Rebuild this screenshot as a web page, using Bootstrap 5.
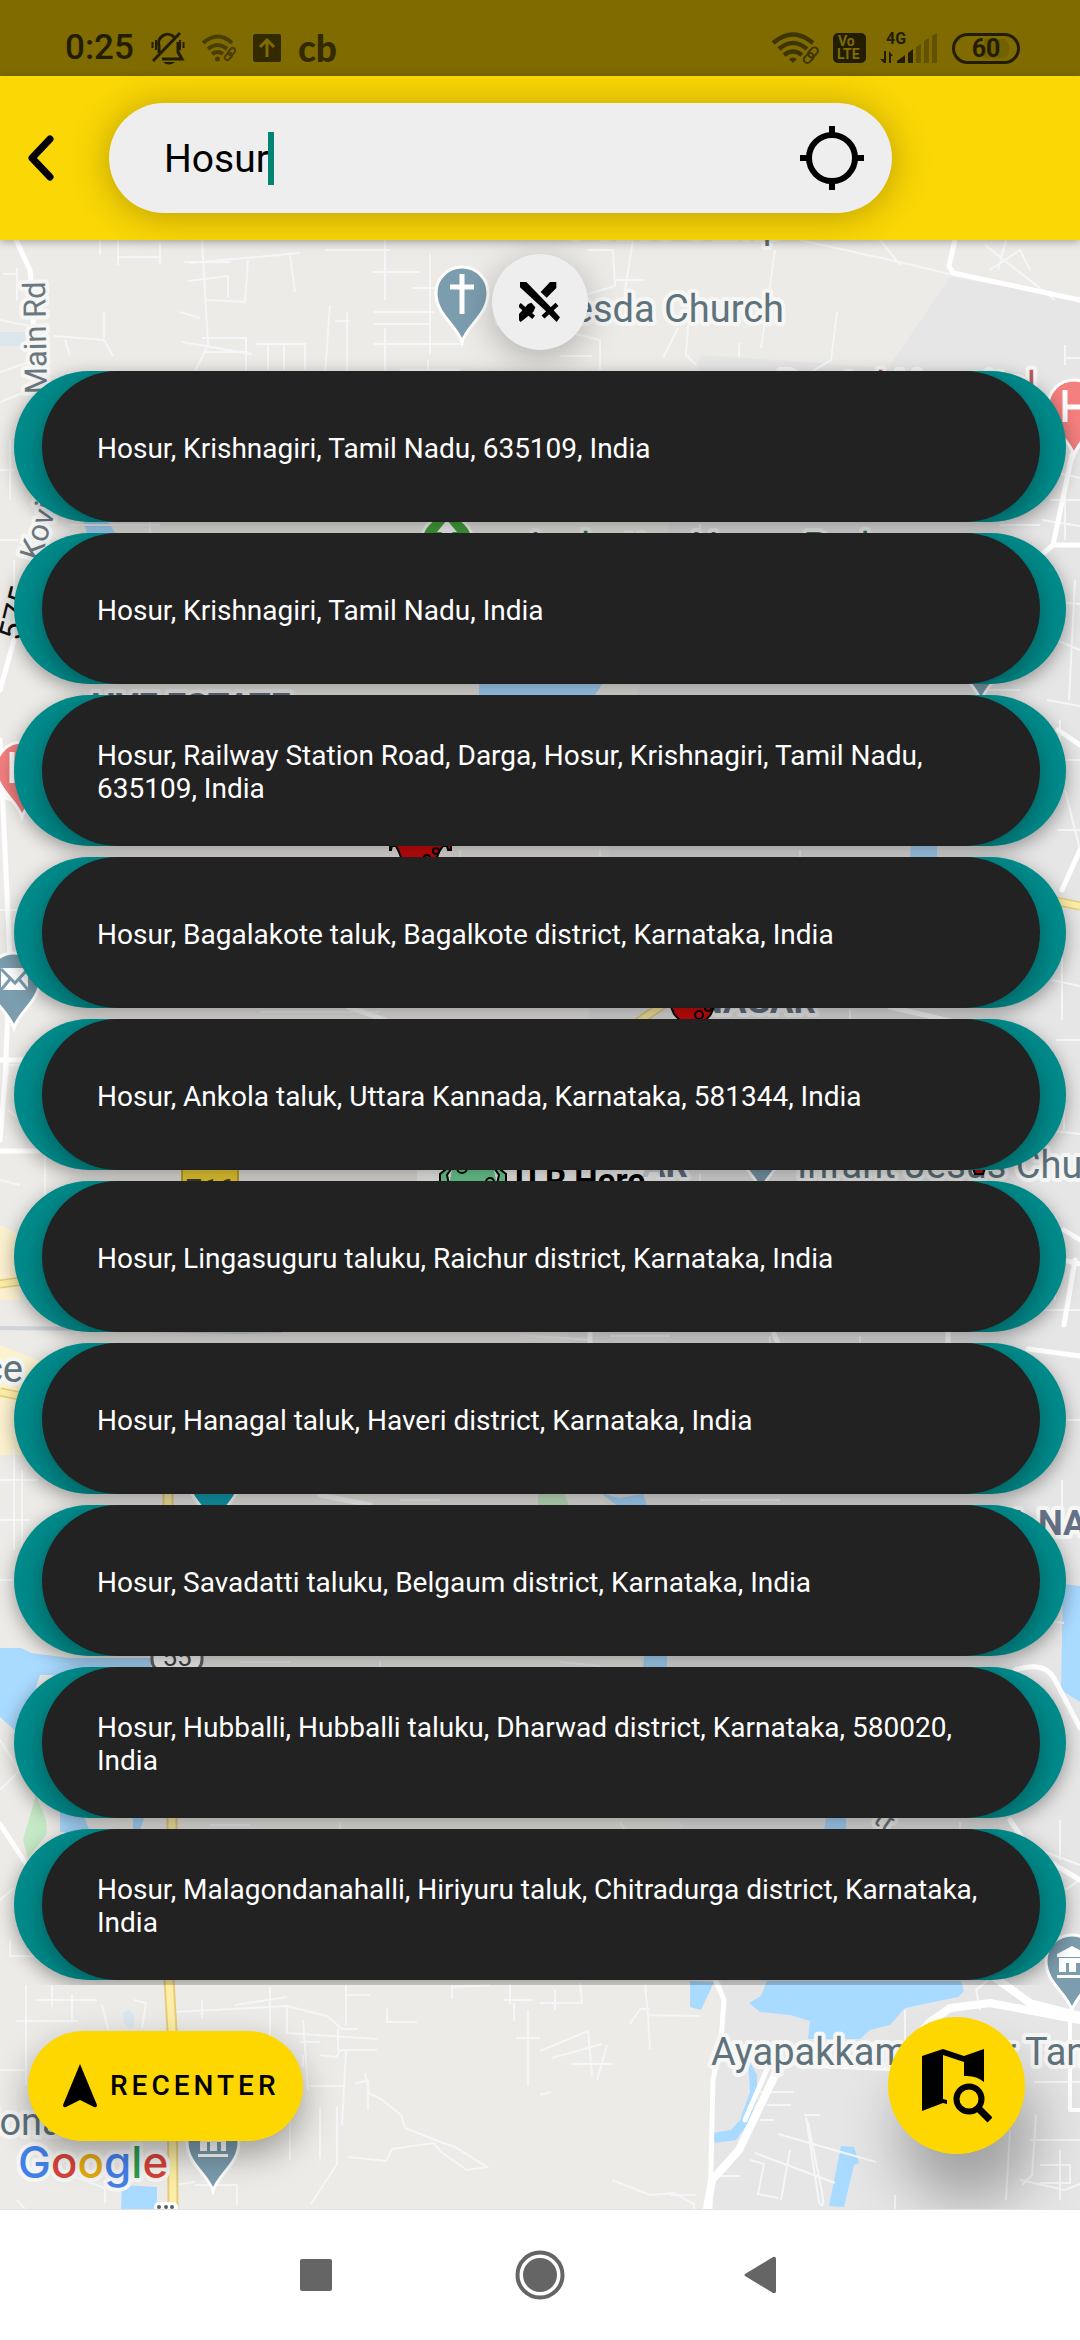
<!DOCTYPE html>
<html lang="en">
<head>
<meta charset="utf-8">
<meta name="viewport" content="width=device-width, initial-scale=1">
<title>Place search</title>
<link href="https://cdn.jsdelivr.net/npm/bootstrap@5.3.0/dist/css/bootstrap.min.css" rel="stylesheet">
<style>
  body { font-family: Roboto, "Liberation Sans", sans-serif; background: #fff; color: #000; }
  button { font-family: inherit; }
  svg { display: block; flex: none; }
  .bare { border: 0; background: none; padding: 0; color: #000; }
  .statusbar { height: 76px; padding: 20px 60px 0 65px; background: #806b00; color: #231d00; }
  .clock { font-size: 35px; line-height: 40px; font-weight: 500; }
  .status-left { gap: 17px; }
  .status-right { gap: 14px; }
  .appbar { background: #fad705; padding: 27px 188px 27px 28px; box-shadow: 0 2px 8px rgba(0,0,0,.3); z-index: 2; }
  .back-btn { width: 81px; }
  .searchbox { height: 110px; border-radius: 55px; background: #eee; padding: 0 28px 0 55px; box-shadow: 0 3px 36px rgba(80,60,0,.38); }
  .searchbox input { width: 104px; font-size: 39px; line-height: 53px; outline: 0; padding-top: 2px; }
  .caret { width: 6px; height: 53px; background: #008573; }
  .mapview { background: #ecebe7; overflow: hidden; }
  .mapview .content { z-index: 1; }
  .clash-btn { width: 96px; height: 96px; margin-top: 14px; border-radius: 50%; background: #eee; box-shadow: 0 8px 34px rgba(0,0,0,.26); }
  .results { padding: 21px 14px 5px; gap: 11px; overflow: hidden; }
  .result { border-radius: 76px; background: #008b8b; padding: 0 26px 0 28px; overflow: hidden; box-shadow: 0 5px 18px rgba(0,0,0,.36); }
  .result-inner { min-height: 151px; border-radius: 76px; background: #222; color: #fff; padding: 3px 56px 0 55px; font-size: 28px; line-height: 33px; text-align: left; box-shadow: 0 8px 26px rgba(0,0,0,.34); }
  .actions { padding: 32px 55px 55px 28px; }
  .recenter { height: 110px; border-radius: 55px; background: #ffd700; padding: 0 23px 0 34px; gap: 12px; font-size: 28px; font-weight: 500; letter-spacing: 4px; box-shadow: 0 14px 34px rgba(0,0,0,.34); }
  .find-btn { width: 137px; height: 137px; border-radius: 50%; background: #ffd700; box-shadow: 12px 48px 60px rgba(0,0,0,.3); }
  .softkeys { height: 131px; border-top: 1px solid #e2e2e2; gap: 172px; z-index: 2; }
  .softkeys button { width: 50px; height: 50px; }
  .place { font-size: 38px; fill: #5f737d; }
  .area { font-size: 35px; font-weight: 700; fill: #657185; }
  .halo text { stroke: #f6f6f5; stroke-width: 8px; stroke-linejoin: round; paint-order: stroke; }
  .road { fill: none; stroke: #fff; stroke-linejoin: round; stroke-linecap: round; }
  .lane { fill: none; stroke: #f5f6f8; stroke-width: 2; }
  .water { fill: #a9daff; }
  .brand { font-family: Inter, "Liberation Sans", sans-serif; font-size: 44px; font-weight: 500; }
  .tag4g { font-size: 16px; font-weight: 700; }
  .volte { font-size: 14px; font-weight: 700; fill: #806b00; }
  .charge { font-size: 25px; font-weight: 700; }
  .cbmark { font-family: Lato, sans-serif; font-size: 37px; line-height: 40px; font-weight: 900; color: #332a00; }
</style>
<script src="https://cdn.jsdelivr.net/npm/bootstrap@5.3.0/dist/js/bootstrap.bundle.min.js"></script>
</head>
<body class="d-flex flex-column min-vh-100">

<div class="statusbar d-flex align-items-center justify-content-between">
  <div class="status-left d-flex align-items-center">
    <div class="clock">0:25</div>
    <svg width="34" height="34" viewBox="0 0 34 34" fill="none" stroke="#231d00" stroke-width="3"><path d="M8 22V15a9 9 0 0 1 15-9M27 11v10l4 7H11M2 30 29 2"/><path d="M12 31h12q-6 5-12 0z" fill="#231d00" stroke="none"/><path d="M1.500 11v6M5 9v10M29 9v10M32.500 11v6" stroke-width="2"/></svg>
    <svg width="34" height="28" viewBox="0 0 34 28" fill="none" stroke="#4a3e00" stroke-width="4"><path d="M1 9q15-13 29 0M6 15q10-8 19 0M10 20q6-4 11 0"/><circle cx="15.500" cy="25" r="2.500" fill="#4a3e00" stroke="none"/><g stroke-width="2"><rect x="22" y="20" width="8" height="5" rx="2.500" transform="rotate(-45 26 22)"/><rect x="26" y="15" width="8" height="5" rx="2.500" transform="rotate(-45 30 18)"/></g></svg>
    <svg width="28" height="28" viewBox="0 0 28 28"><rect width="28" height="28" rx="2" fill="#332a00"/><path d="M14 23V6M7 13l7-7 7 7" fill="none" stroke="#806b00" stroke-width="3"/></svg>
    <div class="cbmark">cb</div>
  </div>
  <div class="status-right d-flex align-items-center">
    <svg width="47" height="32" viewBox="0 0 47 32" fill="none" stroke="#3f3500" stroke-width="4.500"><path d="M1 11q20-17 40 0M7 17q14-12 28 0M12 23q9-7 18 0"/><path d="M17 27q4-3 8 0l-4 4z" fill="#3f3500" stroke="none"/><g stroke-width="2"><rect x="31" y="23" width="11" height="7" rx="3.500" transform="rotate(-45 36 26)"/><rect x="36" y="17" width="11" height="7" rx="3.500" transform="rotate(-45 41 21)"/></g></svg>
    <svg width="33" height="30" viewBox="0 0 33 30"><rect width="33" height="30" rx="5" fill="#231d00"/><text class="volte" x="5" y="13">Vo</text><text class="volte" x="4" y="26">LTE</text></svg>
    <svg width="58" height="32" viewBox="0 0 58 32" fill="#231d00"><text class="tag4g" x="6" y="12">4G</text><path d="M4 19h2v12H4l-4-4h4zM9 31V19l4 5h-2v7zM17 31v-2l8-6v8zM28 31V21l5-4v14z"/><path d="M36 31V15l5-3v19zM44 31V9l5-3v25zM52 31V4l5-3v30z" fill="#625200"/></svg>
    <svg width="68" height="31" viewBox="0 0 68 31"><path d="M32 6h21q9 9 0 19H32z" fill="#736000"/><rect x="1.500" y="1.500" width="65" height="28" rx="14" fill="none" stroke="#231d00" stroke-width="3"/><text class="charge" x="34" y="24" text-anchor="middle" fill="#231d00">60</text></svg>
  </div>
</div>

<header class="appbar d-flex align-items-center position-relative">
  <button class="bare back-btn" type="button" aria-label="Back"><svg width="27" height="48" viewBox="0 0 27 48" fill="none" stroke="#000" stroke-width="7" stroke-linecap="round" stroke-linejoin="round"><path d="M22 5 4 24l18 19"/></svg></button>
  <form class="searchbox d-flex align-items-center flex-grow-1">
    <input class="bare" type="text" value="Hosur" aria-label="Search a place">
    <span class="caret"></span>
    <button class="bare ms-auto" type="button" aria-label="My location"><svg width="64" height="66" viewBox="0 0 64 66" fill="none" stroke="#000" stroke-width="6"><circle cx="32" cy="33" r="23"/><path d="M32 1v8M32 57v8M0 33h8M56 33h8"/></svg></button>
  </form>
</header>

<main class="mapview position-relative flex-grow-1">
  <svg class="position-absolute top-0 start-0 w-100 h-100" viewBox="0 240 1080 1969" preserveAspectRatio="xMidYMin slice" aria-hidden="true">
    <defs>
      <path id="pin" d="M0 49C-5 32-26 22-26 0a26 26 0 0 1 52 0C26 22 5 32 0 49z" stroke="#fff" stroke-width="3"/>
      <g id="museum" fill="#fff"><path d="M-15-9 0-17 15-9v3h-30zM-15 12h30v3h-30zM-13-5h26v14h-5V0H4v9h-7V0h-3v9h-7z"/></g>
    </defs>
    <path fill="#e6e6e6" d="M950 277 1080 300V2209H707L722 1985 650 1700 560 1300 600 900 700 355 888 368z"/>
    <path fill="#fcf2d0" d="M0 1225l20 10v65H0zM0 1345l50 20-10 60-20 30H0z"/>
    <g class="water">
      <path d="M767 1981 761 1996 749 2003 760 2012 790 2015 810 2021 808 2039H860L870 2030 890 2025 905 2008 958 1997 964 1991 961 1981z"/>
      <path d="M690 1981V2007L701 2010 714 1982zM748 2059 757 2075V2100L747 2125 736 2140 715 2143 712 2133 731 2130 740 2120 750 2092z"/>
      <path d="M841 2146 854 2147 859 2163 854 2165 844 2207 829 2206zM122 2185 157 2187V2209H121z"/>
      <path d="M0 1648H21L31 1653 70 1658H151V1675H40L20 1735 0 1717zM1063 1584 1080 1586V1702L1061 1690z"/>
      <path d="M83 520h24l10 16H88zM479 680H605l-12 18H479zM911 843h26v16H910zM601 1493l18 5 24-4 5 14H620zM644 1655h23v16H643zM826 1818h20v14H824zM60 1812h22l8 20H60zM133 1816h12l-5 14h-7z"/>
      <path opacity=".25" d="M0 332h28v14H0zM123 2013q12-8 11 12-4 8-10-2z"/>
    </g>
    <path fill="#c5e8c5" d="M36 1795 46 1820 47 1834 28 1858 23 1840zM538 1493h26l6 15H538z"/>
    <g class="lane">
      <path d="M100 240v15M118 240v25M118 257h41M160 243v22M190 263l110-10M202 240l6 105-16 32-14 70M248 260l-3 42-38-2M290 255l5 37M184 262h46M188 281l40-5M228 275v22M325 250h65M385 240v60M372 272h48M412 288h48M374 312h60M385 328v44l-22 12M430 254v100M374 324h56M374 344h90M180 312l20 6M182 342l70 12M202 338h44v36M203 352h45M255 344h50v26M268 344v26M284 344v26M305 344v25M325 375l5-70M347 312v60M335 321h14M3 274h14M17 268v32M0 320l30 6M54 336l50 4 9 16M65 340l5 15M104 312v26M0 372l30-10M0 402l30-12M400 370h60M428 360v10"/>
      <path d="M588 250h25l2 36-40 12M633 240l-8 50M615 280h28M775 250l-14 98M688 325l-2 30 10 10M663 358l15-30M837 312l-6 48-20 12M560 330l40 10v30M560 356h32M739 343v14M800 240l90 20 60 14M880 240l20 25M985 245l70 55M990 270l30-20 10 20M1006 240l-8 30M1065 345v20M1066 358h14M1066 382h14"/>
      <path d="M1045 470l35 8M1050 500h30M1042 520l38 6M1065 480v60M1000 525h40M1040 600l40 4M1075 580l-6 120M1056 640l24 10M1047 700l33 6M1060 720v60M1052 760h28M1065 790l15 60M1057 830h23M1052 980l28 6M1062 940v80M1056 1040h24M1064 1080v50M1046 1130l34 4M1055 1240v60M1040 1310h40M1060 1390v60M1050 1420h30M1062 1480v40M1044 1620l20 3M1050 1900l30-20M1040 1850l40 15M1060 1820v40"/>
      <path d="M0 470h14M10 440v60M0 540h18M14 560v80M0 780l40 5M0 910h20M8 1055v20M8 1065h22M8 1110l20 16M0 1180l20 5M45 1150v60M0 1480h38M0 1520h30M14 1450v100M22 1470v80M0 1580h30M0 1740l25 40M0 1790l20-20M0 1900l14-12M10 1940v16h24"/>
      <path d="M70 525h90M150 522v12M700 524v10M980 690h40M800 850v8M600 850v8M460 850v8M260 1012h120M850 1010v10M700 1174v8M520 1335l70 5M610 1336h60M770 1336v8M860 1336v8M400 1500h40M700 1500h80M240 1662h50M380 1660v9M560 1662l40 4M210 1825h40M340 1822v8M620 1822l5 8M960 1822v8"/>
      <path d="M26 1985v100M37 2000h60M16 2021h62M0 2070h26M52 1985v22M72 1995v26M102 2005l9 35M134 2000l12 3-4 25M173 2012l114-6 40 10 15 13h16M202 2000v18M235 2005l52-8M240 2042l-16 2M270 1987v70M287 2007v26l90 6M303 2020l5 70M346 1985v40M338 2029v22M387 2008v14h30M345 1995h25M346 2050l-4 75M320 2055l16 2 5-7h36M365 2073l4 20 12 6 20 16 4 13 38 15 12 4 32 20-20 3-26-18-7-9-42 6-6 12-38-4M337 2106v58l-26 40M355 2084l13-4v30M300 2042h20M303 2055v12M310 2086h35M320 2107v52M290 2120v40M490 1985l-38 2M452 1985v14M503 2000h30M514 2003v18M528 2010v76M516 2038h24M17 2200l8 9M50 2150l5 20 50 18v15M0 2115h12M175 2185l20-3M195 2185h42v20M510 1984v20"/>
      <path d="M645 1985l3 30 52 1M648 2015l2 34M630 2024l10-15h10M540 2051l48-20 4 45M540 2003h42l-2-20M555 1990v20M552 2058l50-14M571 2064h42M607 2045l-10 35M540 2095l11-3M612 2180l38 15 24-2 20 11v16M670 2195h26M760 2092h34M767 2105h24M760 2120h14M778 2134l98 28M755 2153l80 30M790 2150l-9 50M804 2115h16M806 2117l13 85q6 10 3-10l-14-70M750 2160l14 4-6 30 20 4M720 2176h20M905 2010v34l-25 4M980 2010l-4-20 20-16M1036 2115l-4 60-10 10M1020 2180l45 10 15-6M1010 2130l-4 70M1030 2140h50M1034 2082h46M1060 2150v50M1040 2165h30v18h-30M895 2195v14"/>
    </g>
    <g class="road" stroke-width="5">
      <path d="M16 240 30 270 32 290 34 340 48 400M14 640 0 690M955 240 949 266 953 273 1080 300M1072 455 1053 545 1030 565M1053 545h27M0 740 10 960 5 1080 0 1140M0 1060h30M0 1151h50M0 795l30 10"/>
      <path d="M716 1981 724 2000 721 2040 713 2080 710 2209M770 2062 745 2120M1064 1325 1075 1260M1028 1349 1080 1356M1063 1260 1080 1264M1062 890 1080 850M1058 730 1080 745M1064 1230 1080 1240M948 1330v14M590 1332v14M774 1334l5 12M320 1495l50 10M890 1007l60 14M348 1007l40 14M0 1824 25 1862M1015 1670q30-10 40 10l25 48M940 1845v5M1010 1820l20 30 50 30"/>
      <path d="M707 2209 712 2180 739 2150 775 2075 782 2066M820 2064 890 2067 930 2022 950 2008 990 2003 1080 2020M990 1974 1030 2003 1080 2016" stroke-width="8"/>
      <path d="M1070 2020v90h10" stroke-width="4"/>
    </g>
    <g fill="none" stroke-linecap="butt">
      <path d="M168 1490v20M172 1815v20M169 1980 172 2030 173 2209" stroke="#e6cc7c" stroke-width="11"/>
      <path d="M168 1490v20M172 1815v20M169 1980 172 2030 173 2209" stroke="#fdeea5" stroke-width="7"/>
      <path d="M1055 901 1080 906M670 1000 635 1024M0 1284l30-4M0 1392l20 4" stroke="#e6cc7c" stroke-width="9"/>
      <path d="M1055 901 1080 906M670 1000 635 1024M0 1284l30-4M0 1392l20 4" stroke="#fdeea5" stroke-width="6"/>
      <path d="M0 1328 100 1329 240 1332 280 1331 310 1320" stroke="#cfd3da" stroke-width="4"/>
    </g>
    <rect x="182" y="1160" width="56" height="36" fill="#f5d435" stroke="#c9a92c" stroke-width="2"/>
    <text x="210" y="1199" font-size="28" font-weight="700" text-anchor="middle" fill="#44412f">716</text>
    <rect x="152" y="1636" width="50" height="36" rx="12" fill="#fff" stroke="#666" stroke-width="3"/>
    <text x="177" y="1666" font-size="26" text-anchor="middle" fill="#444">55</text>
    <g class="halo">
      <text class="place" x="784" y="322" text-anchor="end">Bethesda Church</text>
      <text class="place" x="784" y="238" text-anchor="end">Police Camp</text>
      <text x="1036" y="399" font-size="38" fill="#b95a60" text-anchor="end">Dental Hospital</text>
      <text x="880" y="560" font-size="38" fill="#2e7d4f" text-anchor="end">Ambattur Nagar Park</text>
      <text class="area" x="91" y="718">HVF ESTATE</text>
      <text class="area" x="816" y="1013" text-anchor="end">NAGAR</text>
      <text class="area" x="688" y="1177" text-anchor="end">AR</text>
      <text class="place" x="797" y="1178">Infant Jesus Church</text>
      <text class="place" x="23" y="1382" text-anchor="end">Office</text>
      <text class="area" x="1038" y="1535" text-anchor="end">SURYA&#160;</text>
      <text class="area" x="1038" y="1535">NAGAR</text>
      <text class="place" x="72" y="2135" text-anchor="end">National</text>
      <text class="place" x="711" y="2065">Ayapakkam Water Tank</text>
      <text transform="translate(47 394) rotate(-91)" font-size="31" fill="#6c7880">Main Rd</text>
      <text transform="translate(40 562) rotate(-73)" font-size="31" fill="#6c7880">Kovil</text>
      <text transform="translate(872 1822) rotate(35)" font-size="28" fill="#6c7880">tt</text>
    </g>
    <text transform="translate(20 642) rotate(-76)" font-size="32" fill="#111">575</text>
    <g fill="#7b9dae">
      <use href="#pin" x="462" y="293"/><use href="#pin" x="14" y="979"/><use href="#pin" x="1072" y="1961"/><use href="#pin" x="213" y="2142"/><use href="#pin" x="981" y="652"/><use href="#pin" x="761" y="1142"/>
    </g>
    <use href="#pin" x="1074" y="406" fill="#f47f7f"/><use href="#pin" x="22" y="768" fill="#f47f7f"/>
    <use href="#pin" x="447" y="542" fill="#46a63e"/><use href="#pin" x="214" y="1478" fill="#129eaf"/>
    <path d="M462 274v40M450 287h24" stroke="#fff" stroke-width="5"/>
    <path d="M1065 390v32M1083 390v32M1065 407h18M12 752v31M31 752v31M12 767h19" fill="none" stroke="#fff" stroke-width="5"/>
    <path d="M447 520l10 12h-5l8 12h-26l8-12h-5z" fill="#fff"/>
    <path d="M1 968h27v22H1z" fill="#fff"/><path d="M1 969 15 983 28 969M1 990l9-11M28 990l-9-11" fill="none" stroke="#7b9dae" stroke-width="3"/>
    <use href="#museum" x="1072" y="1963"/><use href="#museum" x="213" y="2142"/>
    <g fill="#d00b0b" stroke="#000" stroke-width="2"><path d="M390 850v-16h61v16h-3l-1-4h-4l-4 6q-4 14-20 16-16-2-20-16l-3-6h-4l-1 4z"/><circle cx="436" cy="851" r="3"/><circle cx="427" cy="858" r="3"/><path d="M666 995l8 19q8 10 19 11 12-2 18-11l8-19z"/><circle cx="699" cy="1015" r="4"/><circle cx="708" cy="1008" r="3"/><path d="M972 1165h14l-3 9h-8z"/></g>
    <path d="M417 1160H660v40H417z" fill="#fff" opacity=".75"/>
    <g fill="#6fd698" stroke="#000" stroke-width="2"><path d="M448 1190l4-20h42l4 20z" stroke="none"/><path d="M440 1184v-10l5-4-3-5h12l-7 10 2 9zM506 1184v-10l-5-4 3-5h-12l7 10-2 9z"/><circle cx="462" cy="1168" r="5"/><circle cx="490" cy="1182" r="4"/></g>
    <text x="515" y="1192" font-size="33" font-weight="700">U R Here</text>
    <g class="brand halo"><text x="18" y="2178"><tspan fill="#4381ea">G</tspan><tspan fill="#d64338">o</tspan><tspan fill="#e5ab10">o</tspan><tspan fill="#4381ea">g</tspan><tspan fill="#319c50">l</tspan><tspan fill="#d64338">e</tspan></text></g>
    <rect x="154" y="2202" width="24" height="16" rx="5" fill="#fff"/><g fill="#53616b"><circle cx="159" cy="2207" r="2"/><circle cx="166" cy="2207" r="2"/><circle cx="172" cy="2207" r="2"/></g>
  </svg>

  <div class="content position-relative d-flex flex-column">
    <button class="bare clash-btn align-self-center d-flex align-items-center justify-content-center" type="button" aria-label="Conflicts">
      <svg width="42" height="42" viewBox="123 111 126 126"><path d="M126 114h19l70 72 31 34-10 14-32-32-78-72zM216 114h19v18l-29 29-18-17zM150 180l10-4 12 14-6 14-38 30-14-14z"/><path d="M237 181l-42 38M124 182l43 38" stroke="#000" stroke-width="13"/></svg>
    </button>
    <ul class="results list-unstyled d-flex flex-column mb-0">
      <li><button class="bare result d-block w-100" type="button"><span class="result-inner d-flex align-items-center">Hosur, Krishnagiri, Tamil Nadu, 635109, India</span></button></li>
      <li><button class="bare result d-block w-100" type="button"><span class="result-inner d-flex align-items-center">Hosur, Krishnagiri, Tamil Nadu, India</span></button></li>
      <li><button class="bare result d-block w-100" type="button"><span class="result-inner d-flex align-items-center">Hosur, Railway Station Road, Darga, Hosur, Krishnagiri, Tamil Nadu, 635109, India</span></button></li>
      <li><button class="bare result d-block w-100" type="button"><span class="result-inner d-flex align-items-center">Hosur, Bagalakote taluk, Bagalkote district, Karnataka, India</span></button></li>
      <li><button class="bare result d-block w-100" type="button"><span class="result-inner d-flex align-items-center">Hosur, Ankola taluk, Uttara Kannada, Karnataka, 581344, India</span></button></li>
      <li><button class="bare result d-block w-100" type="button"><span class="result-inner d-flex align-items-center">Hosur, Lingasuguru taluku, Raichur district, Karnataka, India</span></button></li>
      <li><button class="bare result d-block w-100" type="button"><span class="result-inner d-flex align-items-center">Hosur, Hanagal taluk, Haveri district, Karnataka, India</span></button></li>
      <li><button class="bare result d-block w-100" type="button"><span class="result-inner d-flex align-items-center">Hosur, Savadatti taluku, Belgaum district, Karnataka, India</span></button></li>
      <li><button class="bare result d-block w-100" type="button"><span class="result-inner d-flex align-items-center">Hosur, Hubballi, Hubballi taluku, Dharwad district, Karnataka, 580020, India</span></button></li>
      <li><button class="bare result d-block w-100" type="button"><span class="result-inner d-flex align-items-center">Hosur, Malagondanahalli, Hiriyuru taluk, Chitradurga district, Karnataka, India</span></button></li>
    </ul>
    <div class="actions d-flex align-items-center justify-content-between">
      <button class="bare recenter d-flex align-items-center" type="button">
        <svg width="36" height="44" viewBox="0 0 36 44"><path d="M18 0 35 41q0 3-3 2L18 36 4 43q-3 1-3-2z"/></svg>
        RECENTER
      </button>
      <button class="bare find-btn d-flex align-items-center justify-content-center" type="button" aria-label="Search on map">
        <svg width="70" height="74" viewBox="0 0 70 74"><path d="M0 7 21 0 42 7 62 0v33q-8-7-20-6V13L21 6v44l4 1v4l-4-1L0 62z"/><circle cx="47" cy="50" r="12.500" fill="none" stroke="#000" stroke-width="6"/><path d="M56 59 68 71" stroke="#000" stroke-width="7"/></svg>
      </button>
    </div>
  </div>
</main>

<nav class="softkeys d-flex align-items-center justify-content-center bg-white position-relative" aria-label="System">
  <button class="bare" type="button" aria-label="Recent apps"><svg width="50" height="50" viewBox="0 0 50 50" fill="#656565"><rect x="7" y="9" width="32" height="32" rx="2"/></svg></button>
  <button class="bare" type="button" aria-label="Home"><svg width="50" height="50" viewBox="0 0 50 50" fill="#656565"><circle cx="25" cy="25" r="17"/><circle cx="25" cy="25" r="22.500" fill="none" stroke="#656565" stroke-width="4"/></svg></button>
  <button class="bare" type="button" aria-label="Back"><svg width="50" height="50" viewBox="0 0 50 50" fill="#656565"><path d="M8 24 36 7q3-1 3 2v32q0 3-3 2L8 26q-1-1 0-2z"/></svg></button>
</nav>
</body>
</html>
